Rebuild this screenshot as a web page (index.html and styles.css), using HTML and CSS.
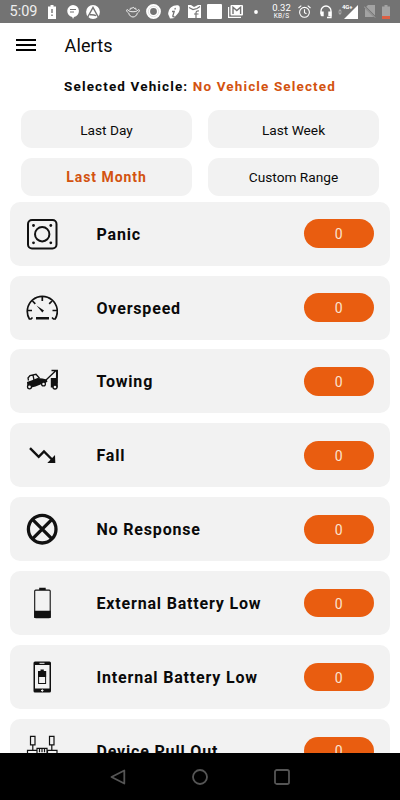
FILE: index.html
```html
<!DOCTYPE html>
<html lang="en">
<head>
<meta charset="utf-8">
<title>Alerts</title>
<link rel="stylesheet" href="styles.css">
</head>
<body>
<div class="screen">
  <div class="status">
    <span class="time">5:09</span>
    <svg class="s-batt" width="8" height="14" viewBox="0 0 8 14"><path fill="#fff" d="M2.500 0h3v1.500H8V14H0V1.500h2.500z"/><path fill="#737373" d="M3.300 4h1.400v4H3.300zM3.300 9.500h1.400V11H3.300z"/></svg>
    <svg class="s-chat" width="12" height="14" viewBox="0 0 12 14"><path fill="#fff" d="M6 0a6 6 0 0 1 1 11.900L6 14l-.8-2.100A6 6 0 0 1 6 0z"/><path stroke="#737373" d="M3 4.500h6M3 7h4"/></svg>
    <svg class="s-a" width="14" height="14" viewBox="0 0 14 14"><circle cx="7" cy="7" r="6.900" fill="#fff"/><path d="M1.500 12.500 7 2.500l5.500 10M4 9.800c2-.2 4-.2 6 .8" fill="none" stroke="#737373" stroke-width="1.500"/></svg>
    <svg class="s-pot" width="14" height="12" viewBox="0 0 14 12"><path d="M3 5C1 2.500 0 4 1 5.500S3 7 3 8s2 3 4 3 4-2 4-3 1-1 2-2.500S13 2.500 11 5c-2 1-6 1-8 0zM4 4c0-2 1-2.500 2-1.500C6.500 1 8 1 8.300 2.500 9.500 1.500 10.300 2.500 10 4" fill="none" stroke="#fff" stroke-width=".9"/></svg>
    <svg class="s-ring" width="15" height="15" viewBox="0 0 15 15"><circle cx="7.500" cy="7.500" r="5.400" fill="none" stroke="#fff" stroke-width="4"/><circle cx="7.500" cy="7.500" r="5.200" fill="none" stroke="#bbb" stroke-width=".4"/></svg>
    <svg class="s-leaf" width="12" height="14" viewBox="0 0 12 14"><path fill="#fff" d="M.5 7C1 3 5-.3 10 .3c2 .5 2 3 1.500 5-.5 3-3 4.500-6 8L2 13.500 1 11C0 10 0 8 .5 7z"/><path d="M4 6.500h2.200L4.800 11c0 1 .7 1 1.700.3M7 3l.3 1.500" fill="none" stroke="#737373" stroke-width="1.300"/></svg>
    <svg class="s-img" width="13" height="13" viewBox="0 0 13 13"><path fill="#fff" d="M0 0h3l3 2 4-2h3v13H0z"/><path d="m1 2.500 4 2 4-1 3-2M8 13V8c0-1.700 1-2.300 3-2M6 9h4.500" fill="none" stroke="#737373" stroke-width="1.200"/></svg>
    <svg class="s-sq" width="15" height="15" viewBox="0 0 15 15"><rect width="15" height="15" rx="1" fill="#fff"/></svg>
    <svg class="s-mail" width="15" height="13" viewBox="0 0 15 13"><path d="M.6 2v10.300H13" fill="none" stroke="#fff" stroke-width="1.200"/><rect x="2.500" width="12.500" height="10.500" rx="1" fill="#fff"/><path d="M5 9V2.300l3.800 3.300 3.800-3.300V9" fill="none" stroke="#737373" stroke-width="1.400"/></svg>
    <svg class="s-dot" width="4" height="4" viewBox="0 0 4 4"><circle cx="2" cy="2" r="1.900" fill="#fff"/></svg>
    <span class="speed"><b>0.32</b><i>KB/S</i></span>
    <svg class="s-alarm" width="13" height="13" viewBox="0 0 13 13"><g fill="none" stroke="#fff" stroke-width="1.100"><circle cx="6.500" cy="7.300" r="4.900"/><path d="M6.500 4.300v3.300l2 1.200M.5 3 3.300.7M12.500 3 9.700.7"/></g></svg>
    <svg class="s-head" width="12" height="14" viewBox="0 0 12 14"><path d="M1 9V6a5 5 0 0 1 10 0v6.500H7" fill="none" stroke="#fff" stroke-width="1.300"/><path fill="#fff" d="M.5 6.500h3.200v4.700H1.500l-1-1zM8.300 6.500h3.200v4.700H8.300z"/></svg>
    <svg class="s-arrows" width="4" height="6" viewBox="0 0 4 6"><path fill="#aaa" d="m2 0 2 2.400H0zM2 6 0 3.600h4z"/></svg>
    <span class="signal"><em>4G+</em><svg width="14" height="14" viewBox="0 0 14 14"><path fill="#fff" d="M14 0v14H0z"/></svg></span>
    <svg class="s-sim" width="12" height="13" viewBox="0 0 12 13"><path fill="#a3a3a3" d="M4 0h7v12H1V3z"/><path d="m0 1 11.500 11.500" stroke="#737373" stroke-width="2"/><path d="m0 1.500 11 11" stroke="#aaa"/></svg>
    <svg class="s-low" width="8" height="14" viewBox="0 0 8 14"><path fill="#a3a3a3" d="M2.500 0h3v1.500H8V11H0V1.500h2.500z"/><path fill="#dc6044" d="M0 11h8v3H0z"/></svg>
  </div>

  <header class="appbar">
    <svg width="20" height="12" viewBox="0 0 20 12"><path d="M0 1h20M0 6h20M0 11h20" stroke="#000" stroke-width="1.800"/></svg>
    <h1>Alerts</h1>
  </header>

  <p class="vehicle">Selected Vehicle: <span>No Vehicle Selected</span></p>

  <nav class="ranges">
    <div class="range">Last Day</div>
    <div class="range">Last Week</div>
    <div class="range active">Last Month</div>
    <div class="range">Custom Range</div>
  </nav>

  <main class="list">
    <section class="card">
      <svg class="icon" viewBox="0 0 32 32"><g fill="none" stroke="#111" stroke-width="2"><rect x="2" y="2" width="28.500" height="28.500" rx="4"/><circle cx="16.200" cy="16.200" r="7.200"/></g><g fill="#111"><circle cx="7.500" cy="7.500" r="1.400"/><circle cx="24.800" cy="7.500" r="1.400"/><circle cx="7.500" cy="24.800" r="1.400"/><circle cx="24.800" cy="24.800" r="1.400"/></g></svg>
      <h2>Panic</h2><span class="count">0</span>
    </section>
    <section class="card">
      <svg class="icon" viewBox="0 0 32 32"><path d="M6.500 25.500 5 27H3.400A15 15 0 1 1 29.200 27h-1.700L26 25.500" fill="none" stroke="#111" stroke-width="1.700"/><path d="M16.300 4.500V9M6.500 9l2.800 2.800M26 9l-2.800 2.800M1.500 18.500H6M31 18.500h-4.500" stroke="#111" stroke-width="1.700"/><path fill="#111" d="m10.500 13.500 7.500 5-1.700 1.900zM10 25h13v2.600H10z"/></svg>
      <h2>Overspeed</h2><span class="count">0</span>
    </section>
    <section class="card">
      <svg class="icon" viewBox="0 0 32 32"><path fill="#111" d="m1 17 5-1.700 5.500-2.300 5 .5 4 1 1 2-2 1.500-5 1.500-5 2-8 2z"/><path d="M2.500 15.500 2 13l2-2.500 6-1.200 3.500 4M7 10.200 8 15M19.500 15.500 30 5.500M25.500 5.500h5.800V13" fill="none" stroke="#111" stroke-width="1.300"/><path d="M30.700 5v13" stroke="#111" stroke-width="1.500"/><path fill="#111" d="M24.800 13H31.800v9.500h-7z"/><g fill="#f2f2f2" stroke="#111" stroke-width="1.300"><circle cx="3.500" cy="21.800" r="2"/><circle cx="17.500" cy="19" r="1.900"/><circle cx="29" cy="22" r="2"/></g></svg>
      <h2>Towing</h2><span class="count">0</span>
    </section>
    <section class="card">
      <svg class="icon" viewBox="0 0 32 32"><path d="m4 9.200 8.700 8.700L18 12.500l8.500 8.500" fill="none" stroke="#111" stroke-width="2.400"/><path fill="#111" d="m29 16 .3 8h-8z"/></svg>
      <h2>Fall</h2><span class="count">0</span>
    </section>
    <section class="card">
      <svg class="icon" viewBox="0 0 32 32"><g fill="none" stroke="#111" stroke-width="3.300"><circle cx="16.200" cy="16.200" r="13.800"/><path d="m6.700 6.700 19 19M25.700 6.700l-19 19"/></g></svg>
      <h2>No Response</h2><span class="count">0</span>
    </section>
    <section class="card">
      <svg class="icon" viewBox="0 0 32 32"><rect x="8.700" y="3.100" width="15.500" height="27.500" rx="1" fill="none" stroke="#111" stroke-width="1.100"/><path fill="#111" d="M13.200.7h6.500v2.400h-6.500zM8.200 23.700h16.500V31H8.200z"/></svg>
      <h2>External Battery Low</h2><span class="count">0</span>
    </section>
    <section class="card">
      <svg class="icon" viewBox="0 0 32 32"><path fill="#111" fill-rule="evenodd" d="M9 .5h14.500a1.500 1.500 0 0 1 1.500 1.500v28a1.500 1.500 0 0 1-1.500 1.500H9A1.500 1.500 0 0 1 7.500 30V2A1.500 1.500 0 0 1 9 .5zM9 4v23.500h14.500V4z"/><path d="M13.500 2.300h5M16.300 28.300v2.500M15 29.500h2.500" stroke="#f2f2f2"/><rect x="12.600" y="10.500" width="7" height="12" fill="none" stroke="#111"/><path fill="#111" d="M14.500 8.500h3.300V10h2.300v6h-8v-6h2.400z"/></svg>
      <h2>Internal Battery Low</h2><span class="count">0</span>
    </section>
    <section class="card">
      <svg class="icon" viewBox="0 0 32 32"><g fill="none" stroke="#111" stroke-width="1.200"><path d="M4.500 1.300H9v8.500H4.500zM23.500 1.300H28v8.500h-4.500zM6.800 9.800v5M25.800 9.800v5M1.500 15.300H11v5H1.500zM21.500 15.300H31v5h-9.500zM11 13.300h10v6H11zM13.500 13.300v4M16 13.300v4M18.500 13.300v4"/></g></svg>
      <h2>Device Pull Out</h2><span class="count">0</span>
    </section>
  </main>

  <footer class="navbar">
    <svg width="16" height="16" viewBox="0 0 16 16"><path d="M14.300 1.500v13L1.500 8z" fill="none" stroke="#555" stroke-width="1.800" stroke-linejoin="round"/></svg>
    <svg width="16" height="16" viewBox="0 0 16 16"><circle cx="8" cy="8" r="7" fill="none" stroke="#555" stroke-width="1.800"/></svg>
    <svg width="16" height="16" viewBox="0 0 16 16"><rect x="1" y="1" width="14" height="14" rx="1.800" fill="none" stroke="#555" stroke-width="1.800"/></svg>
  </footer>
</div>
</body>
</html>
```
FILE: styles.css
```css
* { box-sizing: border-box; margin: 0; padding: 0; }
body { font-family: Roboto, "Liberation Sans", sans-serif; background: #fff; color: #0a0a0a; }
svg { display: block; flex: none; }
.screen { width: 400px; height: 800px; display: flex; flex-direction: column; overflow: hidden; }

.status { height: 23px; flex: none; background: #737373; color: #fff; display: flex; align-items: center; padding-left: 9.500px; overflow: hidden; white-space: nowrap; }
.time { width: 27.500px; font-size: 14.500px; line-height: 24px; padding-top: 1px; color: #eee; }
.s-batt { margin-left: 10.500px; }
.s-chat { margin-left: 11px; }
.s-a { margin-left: 7.500px; }
.s-pot { margin-left: 26px; }
.s-ring { margin-left: 6px; }
.s-leaf { margin-left: 7px; }
.s-img { margin-left: 8px; }
.s-sq { margin-left: 6px; }
.s-mail { margin-left: 6px; }
.s-dot { margin-left: 10.500px; }
.speed { margin-left: 14px; width: 20px; display: flex; flex-direction: column; align-items: center; }
.speed b { font-weight: 400; font-size: 9.500px; line-height: 10px; }
.speed i { font-style: normal; font-size: 6.500px; line-height: 7px; letter-spacing: .2px; }
.s-alarm { margin-left: 6px; }
.s-head { margin-left: 9px; }
.s-arrows { margin-left: 6px; }
.signal { position: relative; margin-left: 2px; }
.signal em { position: absolute; left: -1.500px; top: -1.500px; font-style: normal; font-weight: 700; font-size: 6px; line-height: 7px; letter-spacing: -.2px; }
.s-sim { margin-left: 6px; }
.s-low { margin-left: 6px; }

.appbar { height: 44px; flex: none; display: flex; align-items: center; gap: 28.500px; padding-left: 16px; }
.appbar h1 { font-weight: 400; font-size: 18px; letter-spacing: .15px; padding-top: 1px; }

.vehicle { margin-top: 10px; flex: none; text-align: center; font-weight: 700; font-size: 13.500px; line-height: 18px; letter-spacing: 1.130px; white-space: nowrap; }
.vehicle span { color: #d35310; }

.ranges { flex: none; margin-top: 15.200px; padding: 0 21px; display: grid; grid-template-columns: 171px 171px; column-gap: 16px; row-gap: 9.500px; }
.range { height: 38px; border-radius: 11px; background: #f2f2f2; display: flex; align-items: center; justify-content: center; font-size: 13.700px; padding-top: 1px; }
.range.active { color: #d35310; font-weight: 700; font-size: 14px; letter-spacing: .950px; }

.list { flex: 1; min-height: 0; overflow: hidden; padding: 6px 10px 0; display: flex; flex-direction: column; gap: 9.900px; }
.card { height: 64px; flex: none; background: #f2f2f2; border-radius: 10px; display: flex; align-items: center; padding: 0 16.500px 0 16px; }
.icon { width: 32px; height: 32px; }
.card h2 { margin-left: 38.500px; flex: 1; font-weight: 700; font-size: 16px; letter-spacing: .820px; padding-top: 1px; white-space: nowrap; }
.count { width: 69.500px; height: 28.500px; border-radius: 15px; background: #e95d10; color: #fbe3d0; display: flex; align-items: center; justify-content: center; font-size: 14px; padding-top: 1px; }

.navbar { height: 47px; flex: none; background: #000; display: flex; align-items: center; justify-content: center; gap: 66px; }
```
